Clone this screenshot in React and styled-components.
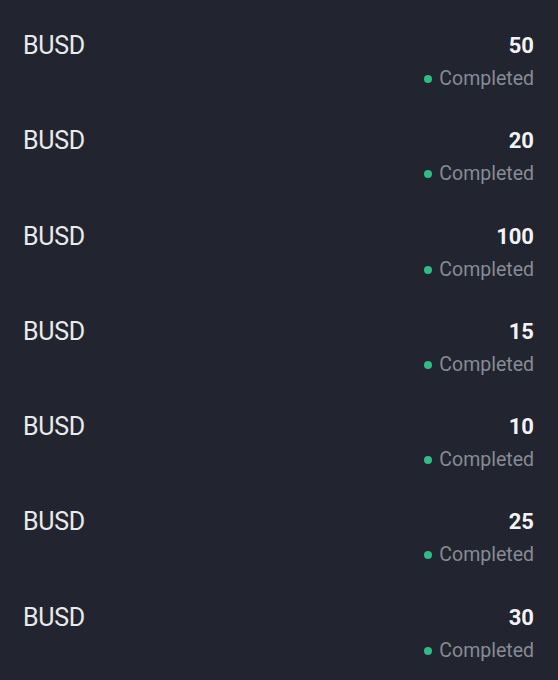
import styled, { createGlobalStyle } from "styled-components";

const GlobalStyle = createGlobalStyle`
  html, body {
    margin: 0;
    padding: 0;
    background: #22252f;
  }
  body {
    font-family: Roboto, "Noto Sans", sans-serif;
  }
`;

const List = styled.div`
  width: 558px;
  height: 680px;
  background: #22252f;
  box-sizing: border-box;
  padding: 29px 24px 0 23px;
  display: flex;
  flex-direction: column;
  overflow: hidden;
`;

const Row = styled.div`
  display: flex;
  justify-content: space-between;
  align-items: flex-start;
  height: 95.3px;
  flex-shrink: 0;
`;

const Coin = styled.span`
  font-size: 25px;
  line-height: 34px;
  color: #e9eaed;
  letter-spacing: -0.3px;
`;

const Side = styled.div`
  display: flex;
  flex-direction: column;
  align-items: flex-end;
`;

const Amount = styled.span`
  font-size: 22px;
  font-weight: 700;
  line-height: 34px;
  color: #f2f3f5;
`;

const Status = styled.span`
  display: flex;
  align-items: center;
  gap: 7px;
  font-size: 19.5px;
  line-height: 26px;
  color: #868b95;
  margin-top: 3px;
`;

const Dot = styled.span`
  width: 8px;
  height: 8px;
  border-radius: 50%;
  background: ${(p) => p.color};
`;

const items = [50, 20, 100, 15, 10, 25, 30];

export default function App() {
  return (
    <>
      <GlobalStyle />
      <List>
        {items.map((amount, i) => (
          <Row key={i}>
            <Coin>BUSD</Coin>
            <Side>
              <Amount>{amount}</Amount>
              <Status>
                <Dot color="#2ebd85" />
                Completed
              </Status>
            </Side>
          </Row>
        ))}
      </List>
    </>
  );
}
